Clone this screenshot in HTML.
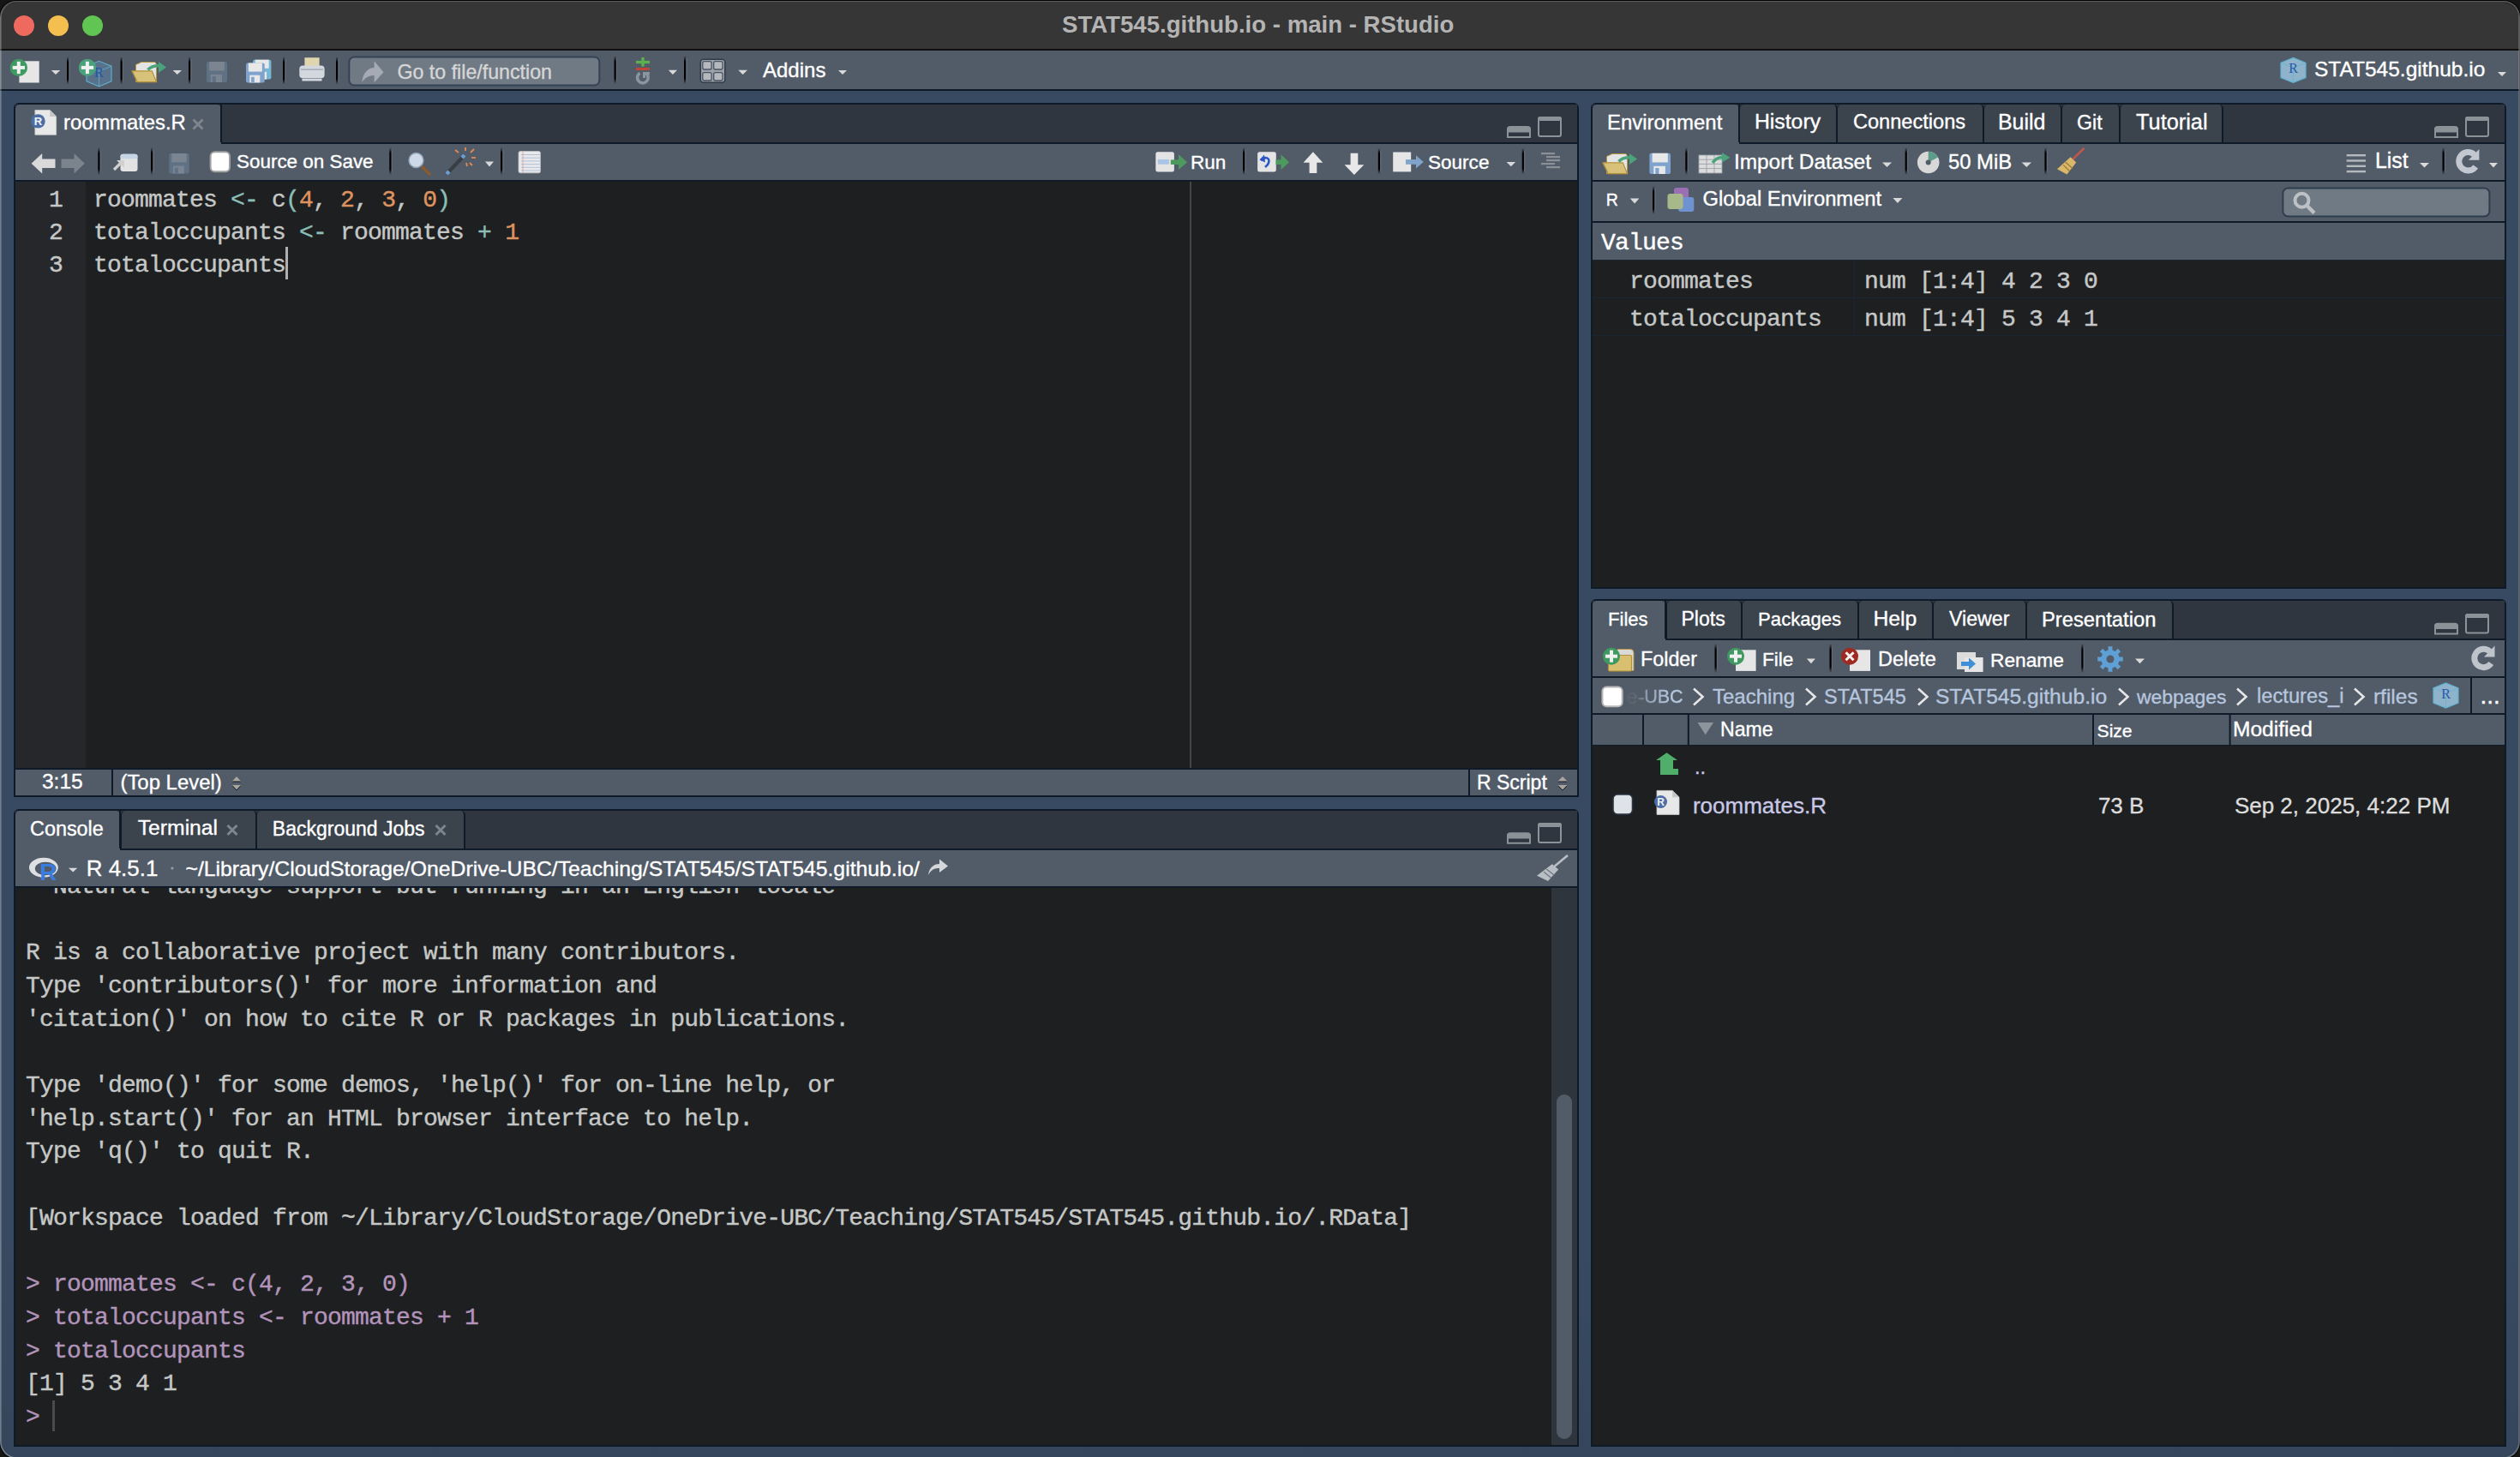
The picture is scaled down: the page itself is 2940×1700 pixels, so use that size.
<!DOCTYPE html><html><head><meta charset="utf-8"><style>
html,body{margin:0;padding:0}
body{width:2940px;height:1700px;position:relative;overflow:hidden;background:#161616}
.a{position:absolute}
.t{white-space:pre}
</style></head><body>
<div class="a" style="left:0;top:3px;width:2939px;height:1699px;background:linear-gradient(to bottom,#384a61 0%,#384a61 85%,#35465c 100%);border-radius:20px 20px 20px 20px;overflow:hidden">
<div class="a" style="left:0;top:0;width:2939px;height:1697px;position:absolute">
</div></div>
<div class="a" style="left:0;top:3px;width:2939px;height:54px;background:#363636;border-radius:20px 20px 0 0"></div>
<div class="a" style="left:0px;top:57px;width:2939px;height:2px;background:#101010;"></div>
<div class="a" style="left:16px;top:18px;width:24px;height:24px;border-radius:50%;background:#ee6a5f"></div>
<div class="a" style="left:56px;top:18px;width:24px;height:24px;border-radius:50%;background:#f5bf4f"></div>
<div class="a" style="left:96px;top:18px;width:24px;height:24px;border-radius:50%;background:#61c554"></div>
<div class="a" style="left:0px;top:59px;width:2939px;height:45px;background:#525c68;"></div>
<div class="a" style="left:0px;top:104px;width:2939px;height:2px;background:#0e1a28;"></div>
<div class="a" style="left:16px;top:120px;width:1822px;height:806px;border:2px solid #0e1a28;border-radius:6px 6px 0 0;background:#1e1f21;overflow:hidden"></div>
<div class="a" style="left:18px;top:122px;width:1822px;height:44px;background:#2f363f;"></div>
<div class="a" style="left:18px;top:166px;width:1822px;height:2px;background:#0e1a28;"></div>
<div class="a" style="left:18px;top:168px;width:1822px;height:42px;background:#525c68;"></div>
<div class="a" style="left:18px;top:210px;width:1822px;height:2px;background:#0e1a28;"></div>
<div class="a" style="left:18px;top:122px;width:240px;height:46px;background:#525c68;border-radius:5px 5px 0 0"></div>
<div class="a" style="left:257px;top:122px;width:2px;height:44px;background:#0e1a28;"></div>
<div class="a" style="left:18px;top:212px;width:82px;height:684px;background:#25272b;"></div>
<div class="a" style="left:1388px;top:212px;width:2px;height:684px;background:#464646;"></div>
<div class="a" style="left:18px;top:896px;width:1822px;height:2px;background:#0e1a28;"></div>
<div class="a" style="left:18px;top:898px;width:1822px;height:30px;background:#525c68;"></div>
<div class="a" style="left:130px;top:898px;width:2px;height:30px;background:#0e1a28;"></div>
<div class="a" style="left:1713px;top:898px;width:2px;height:30px;background:#0e1a28;"></div>
<div class="a" style="left:16px;top:944px;width:1822px;height:740px;border:2px solid #0e1a28;border-radius:6px 6px 0 0;background:#1e1f21;overflow:hidden"></div>
<div class="a" style="left:18px;top:946px;width:1822px;height:44px;background:#2f363f;"></div>
<div class="a" style="left:18px;top:990px;width:1822px;height:2px;background:#0e1a28;"></div>
<div class="a" style="left:18px;top:992px;width:1822px;height:42px;background:#525c68;"></div>
<div class="a" style="left:18px;top:1034px;width:1822px;height:2px;background:#0e1a28;"></div>
<div class="a" style="left:18px;top:946px;width:122px;height:46px;background:#525c68;border-radius:5px 5px 0 0"></div>
<div class="a" style="left:139px;top:946px;width:2px;height:44px;background:#0e1a28;"></div>
<div class="a" style="left:141px;top:946px;width:156px;height:44px;background:#3b434d;border:solid #0e1a28;border-width:0 2px 0 1px;border-radius:5px 5px 0 0"></div>
<div class="a" style="left:299px;top:946px;width:241px;height:44px;background:#3b434d;border:solid #0e1a28;border-width:0 2px 0 1px;border-radius:5px 5px 0 0"></div>
<div class="a" style="left:1810px;top:1036px;width:30px;height:650px;background:#2f353c;"></div>
<div class="a" style="left:1816px;top:1277px;width:18px;height:402px;background:#525c68;border-radius:9px"></div>
<div class="a" style="left:1856px;top:120px;width:1064px;height:563px;border:2px solid #0e1a28;border-radius:6px 6px 0 0;background:#1e1f21;overflow:hidden"></div>
<div class="a" style="left:1858px;top:122px;width:1064px;height:44px;background:#2f363f;"></div>
<div class="a" style="left:1858px;top:166px;width:1064px;height:2px;background:#0e1a28;"></div>
<div class="a" style="left:1858px;top:168px;width:1064px;height:42px;background:#525c68;"></div>
<div class="a" style="left:1858px;top:210px;width:1064px;height:2px;background:#0e1a28;"></div>
<div class="a" style="left:1858px;top:212px;width:1064px;height:46px;background:#525c68;"></div>
<div class="a" style="left:1858px;top:258px;width:1064px;height:2px;background:#0e1a28;"></div>
<div class="a" style="left:1858px;top:260px;width:1064px;height:43px;background:#525c68;"></div>
<div class="a" style="left:1858px;top:122px;width:171px;height:46px;background:#525c68;border-radius:5px 5px 0 0"></div>
<div class="a" style="left:2028px;top:122px;width:2px;height:44px;background:#0e1a28;"></div>
<div class="a" style="left:2029px;top:122px;width:112px;height:44px;background:#3b434d;border:solid #0e1a28;border-width:0 2px 0 1px;border-radius:5px 5px 0 0"></div>
<div class="a" style="left:2143px;top:122px;width:169px;height:44px;background:#3b434d;border:solid #0e1a28;border-width:0 2px 0 1px;border-radius:5px 5px 0 0"></div>
<div class="a" style="left:2314px;top:122px;width:89px;height:44px;background:#3b434d;border:solid #0e1a28;border-width:0 2px 0 1px;border-radius:5px 5px 0 0"></div>
<div class="a" style="left:2405px;top:122px;width:66px;height:44px;background:#3b434d;border:solid #0e1a28;border-width:0 2px 0 1px;border-radius:5px 5px 0 0"></div>
<div class="a" style="left:2473px;top:122px;width:118px;height:44px;background:#3b434d;border:solid #0e1a28;border-width:0 2px 0 1px;border-radius:5px 5px 0 0"></div>
<div class="a" style="left:1858px;top:303px;width:1064px;height:1px;background:#1a2634;"></div>
<div class="a" style="left:1858px;top:347px;width:1064px;height:1px;background:#1a2634;"></div>
<div class="a" style="left:1858px;top:391px;width:1064px;height:1px;background:#1a2634;"></div>
<div class="a" style="left:2163px;top:303px;width:1px;height:88px;background:#1a2634;"></div>
<div class="a" style="left:1856px;top:699px;width:1064px;height:985px;border:2px solid #0e1a28;border-radius:6px 6px 0 0;background:#1e1f21;overflow:hidden"></div>
<div class="a" style="left:1858px;top:701px;width:1064px;height:44px;background:#2f363f;"></div>
<div class="a" style="left:1858px;top:745px;width:1064px;height:2px;background:#0e1a28;"></div>
<div class="a" style="left:1858px;top:747px;width:1064px;height:42px;background:#525c68;"></div>
<div class="a" style="left:1858px;top:789px;width:1064px;height:2px;background:#0e1a28;"></div>
<div class="a" style="left:1858px;top:791px;width:1064px;height:41px;background:#525c68;"></div>
<div class="a" style="left:1858px;top:832px;width:1064px;height:2px;background:#0e1a28;"></div>
<div class="a" style="left:1858px;top:834px;width:1064px;height:36px;background:#525c68;"></div>
<div class="a" style="left:1858px;top:869px;width:1064px;height:1px;background:#0e1a28;"></div>
<div class="a" style="left:1858px;top:701px;width:85px;height:46px;background:#525c68;border-radius:5px 5px 0 0"></div>
<div class="a" style="left:1942px;top:701px;width:2px;height:44px;background:#0e1a28;"></div>
<div class="a" style="left:1944px;top:701px;width:86px;height:44px;background:#3b434d;border:solid #0e1a28;border-width:0 2px 0 1px;border-radius:5px 5px 0 0"></div>
<div class="a" style="left:2032px;top:701px;width:134px;height:44px;background:#3b434d;border:solid #0e1a28;border-width:0 2px 0 1px;border-radius:5px 5px 0 0"></div>
<div class="a" style="left:2168px;top:701px;width:85px;height:44px;background:#3b434d;border:solid #0e1a28;border-width:0 2px 0 1px;border-radius:5px 5px 0 0"></div>
<div class="a" style="left:2255px;top:701px;width:107px;height:44px;background:#3b434d;border:solid #0e1a28;border-width:0 2px 0 1px;border-radius:5px 5px 0 0"></div>
<div class="a" style="left:2364px;top:701px;width:169px;height:44px;background:#3b434d;border:solid #0e1a28;border-width:0 2px 0 1px;border-radius:5px 5px 0 0"></div>
<svg class="a" style="left:0;top:0" width="2940" height="1700" viewBox="0 0 2940 1700"><defs><linearGradient id="sepg" x1="0" y1="0" x2="0" y2="1"><stop offset="0" stop-color="#000" stop-opacity="0"/><stop offset="0.2" stop-color="#000" stop-opacity="1"/><stop offset="0.8" stop-color="#000" stop-opacity="1"/><stop offset="1" stop-color="#000" stop-opacity="0"/></linearGradient></defs>
<rect x="22.4" y="71.3" width="23.3" height="25.2" fill="#e6e6e6"/>
<circle cx="21.8" cy="78.9" r="10.2" fill="#3f9a62"/>
<rect x="14.7" y="76.9" width="14.3" height="4" fill="#f0f0f0"/>
<rect x="19.8" y="71.8" width="4" height="14.3" fill="#f0f0f0"/>
<polygon points="59.8,82.0 70.2,82.0 65.0,87.0" fill="#d9d9d9"/>
<rect x="78" y="66" width="2.2" height="32.5" fill="url(#sepg)"/>
<rect x="80.6" y="69" width="1" height="26.5" fill="#6f7882" opacity="0.6"/>
<polygon points="101.0,77.2 115.5,71.3 130.0,77.2 130.0,94.9 115.5,100.8 101.0,94.9" fill="#5a7590" opacity="0.9" stroke="#62b3d6" stroke-width="1.2"/>
<polyline points="101.0,77.2 115.5,83.1 130.0,77.2" fill="none" stroke="#62b3d6" stroke-width="1" opacity="0.7"/>
<line x1="115.5" y1="83.1" x2="115.5" y2="100.8" stroke="#62b3d6" stroke-width="1" opacity="0.7"/>
<text x="115.5" y="89.59" font-family="Liberation Serif" font-size="16.2" fill="#2456a8" text-anchor="middle">R</text>
<circle cx="101.9" cy="78.9" r="10.2" fill="#4aa27b"/>
<rect x="94.8" y="76.9" width="14.3" height="4" fill="#f0f0f0"/>
<rect x="99.9" y="71.8" width="4" height="14.3" fill="#f0f0f0"/>
<rect x="140.5" y="66" width="2.2" height="32.5" fill="url(#sepg)"/>
<rect x="143.1" y="69" width="1" height="26.5" fill="#6f7882" opacity="0.6"/>
<polygon points="158.5,75.5 165.0,72.5 181.0,72.5 182.5,75.0 182.5,95.6 158.5,95.6" fill="#e4e4e4" stroke="#b39644" stroke-width="1"/>
<polygon points="154.0,82.8 177.3,82.8 182.5,95.6 160.3,95.6" fill="#d8c27a" stroke="#b3923a" stroke-width="1.2"/>
<path d="M172.5,81.5 Q177.0,76.5 186.0,76.8" fill="none" stroke="#4aa37a" stroke-width="3.6"/>
<polygon points="185.0,72.0 194.0,78.6 185.0,85.0" fill="#4aa37a"/>
<polygon points="201.7,82.0 212.0,82.0 206.8,87.0" fill="#d9d9d9"/>
<rect x="220" y="66" width="2.2" height="32.5" fill="url(#sepg)"/>
<rect x="222.6" y="69" width="1" height="26.5" fill="#6f7882" opacity="0.6"/>
<rect x="241" y="72" width="24" height="24" rx="2" fill="#5f7185"/>
<rect x="244.12" y="72" width="17.759999999999998" height="10.56" fill="#7b8591"/>
<rect x="245.8" y="86.88" width="13.200000000000001" height="9.120000000000001" fill="#7b8591"/>
<rect x="247.72" y="89.03999999999999" width="4.08" height="6.959999999999999" fill="#5f7185"/>
<rect x="295" y="69.7" width="21.399999999999977" height="22.89999999999999" rx="2" fill="#78b6d6"/>
<rect x="297.782" y="69.7" width="15.835999999999983" height="10.075999999999997" fill="#e8e8e8"/>
<rect x="299.28" y="83.898" width="11.769999999999989" height="8.701999999999996" fill="#e8e8e8"/>
<rect x="300.992" y="85.959" width="3.6379999999999963" height="6.640999999999997" fill="#78b6d6"/>
<rect x="287" y="73.5" width="21.69999999999999" height="22.900000000000006" rx="2" fill="#7fa3cc"/>
<rect x="289.821" y="73.5" width="16.057999999999993" height="10.076000000000002" fill="#e8e8e8"/>
<rect x="291.34" y="87.69800000000001" width="11.934999999999995" height="8.702000000000002" fill="#e8e8e8"/>
<rect x="293.076" y="89.759" width="3.6889999999999983" height="6.641000000000001" fill="#7fa3cc"/>
<rect x="330" y="66" width="2.2" height="32.5" fill="url(#sepg)"/>
<rect x="332.6" y="69" width="1" height="26.5" fill="#6f7882" opacity="0.6"/>
<rect x="355.4" y="67.2" width="17.2" height="14" fill="#dfd5ae"/>
<rect x="349.3" y="76.4" width="29.3" height="14.8" rx="4" fill="#d3d7de"/>
<rect x="352.4" y="91.7" width="23.1" height="2.8" fill="#d3d7de"/>
<rect x="351" y="80.6" width="26" height="1" fill="#8c95a1"/>
<rect x="392" y="66" width="2.2" height="32.5" fill="url(#sepg)"/>
<rect x="394.6" y="69" width="1" height="26.5" fill="#6f7882" opacity="0.6"/>
<rect x="407.3" y="66.4" width="292" height="33.2" rx="6" fill="#6f7a85" stroke="#344255" stroke-width="2"/>
<path d="M422.3,96 C423,86 429,79 436.6,79 V71.2 L447.5,84.2 L436.6,96.3 V88 C430,88 425.5,91 422.3,96 Z" fill="#a5aab5"/>
<rect x="716.5" y="65" width="2.2" height="33" fill="url(#sepg)"/>
<rect x="719.1" y="68" width="1" height="27" fill="#6f7882" opacity="0.6"/>
<rect x="742" y="70.8" width="16" height="3.4" fill="#5cb04f"/><rect x="748.3" y="67" width="3.4" height="10.6" fill="#5cb04f"/>
<rect x="742" y="79" width="16" height="3" fill="#c0463a"/>
<path d="M746.5,85.2 A6.3,6.3 0 1 0 753.2,85.2" fill="none" stroke="#8a95a2" stroke-width="3.6"/>
<rect x="750" y="84" width="8" height="3.2" fill="#8a95a2"/><rect x="750" y="84" width="3" height="7" fill="#8a95a2"/>
<polygon points="779.8,81.8 790.0,81.8 784.9,87.0" fill="#d9d9d9"/>
<rect x="798" y="65" width="2.2" height="33" fill="url(#sepg)"/>
<rect x="800.6" y="68" width="1" height="27" fill="#6f7882" opacity="0.6"/>
<rect x="817.3" y="69.2" width="28.5" height="27" rx="3.5" fill="#9da2a8" stroke="#2e3a48" stroke-width="1.5"/>
<rect x="819.8" y="71.7" width="10.3" height="9.3" rx="2" fill="#b5b9be" stroke="#485464" stroke-width="1.3"/>
<rect x="832.7" y="71.7" width="10.3" height="9.3" rx="2" fill="#b5b9be" stroke="#485464" stroke-width="1.3"/>
<rect x="819.8" y="84.7" width="10.3" height="9.3" rx="2" fill="#b5b9be" stroke="#485464" stroke-width="1.3"/>
<rect x="832.7" y="84.7" width="10.3" height="9.3" rx="2" fill="#b5b9be" stroke="#485464" stroke-width="1.3"/>
<polygon points="861.3,81.8 872.0,81.8 866.6,87.0" fill="#d9d9d9"/>
<polygon points="978.0,82.0 988.0,82.0 983.0,87.0" fill="#d9d9d9"/>
<polygon points="2661.0,73.3 2675.5,67.5 2690.0,73.3 2690.0,90.6 2675.5,96.4 2661.0,90.6" fill="#8fb3cb" opacity="1.0" stroke="#5fb3d2" stroke-width="1.2"/>
<polyline points="2661.0,73.3 2675.5,79.1 2690.0,73.3" fill="none" stroke="#5fb3d2" stroke-width="1" opacity="0.7"/>
<line x1="2675.5" y1="79.06" x2="2675.5" y2="96.4" stroke="#5fb3d2" stroke-width="1" opacity="0.7"/>
<text x="2675.5" y="85.418" font-family="Liberation Serif" font-size="15.9" fill="#2a58a8" text-anchor="middle">R</text>
<polygon points="2914.0,84.0 2924.0,84.0 2919.0,89.0" fill="#d9d9d9"/>
<polygon points="40.9,128.5 58.2,128.5 65.6,135.9 65.6,157.3 40.9,157.3" fill="#e8e8e8" stroke="#c9c9c9" stroke-width="0.8"/>
<polygon points="58.2,128.5 58.2,135.9 65.6,135.9" fill="#c6c6c6"/>
<circle cx="44.5" cy="141.4" r="8.2" fill="#4c6ea6"/>
<text x="44.5" y="145.9" font-family="Liberation Sans" font-size="13.1" font-weight="700" fill="#f2f2f2" text-anchor="middle">R</text>
<path d="M225.5,139.5 L236.5,150.5 M236.5,139.5 L225.5,150.5" stroke="#7d858d" stroke-width="3"/>
<path d="M1759,160 V151 Q1759,148 1762,148 H1782 Q1785,148 1785,151 V160 Z" fill="none" stroke="#8b9399" stroke-width="2"/>
<rect x="1758" y="148" width="28" height="6.6" rx="3" fill="#8b9399"/>
<rect x="1795" y="137" width="26" height="22" rx="2" fill="none" stroke="#8b9399" stroke-width="2"/>
<rect x="1794" y="136" width="28" height="5" rx="3" fill="#8b9399"/>
<polygon points="36.6,190.8 49.2,179.0 49.2,185.6 64.5,185.6 64.5,195.9 49.2,195.9 49.2,202.5" fill="#d9d9d9"/>
<polygon points="98.8,190.8 86.5,179.0 86.5,185.6 71.5,185.6 71.5,195.9 86.5,195.9 86.5,202.5" fill="#7b838c"/>
<rect x="114.3" y="172" width="2.2" height="32" fill="url(#sepg)"/>
<rect x="116.89999999999999" y="175" width="1" height="26" fill="#6f7882" opacity="0.6"/>
<rect x="140.5" y="179.7" width="20" height="20.3" rx="3" fill="#e3e3e3"/><rect x="140.5" y="179.7" width="20" height="5.5" rx="3" fill="#c5d5e6"/>
<path d="M133,198 L141,190" stroke="#d0d0d0" stroke-width="3.2"/><polygon points="136,187 145,187 145,196" fill="#d0d0d0"/>
<rect x="176" y="172" width="2.2" height="32" fill="url(#sepg)"/>
<rect x="178.6" y="175" width="1" height="26" fill="#6f7882" opacity="0.6"/>
<rect x="197.2" y="179" width="23.5" height="23.5" rx="2" fill="#5f7185"/>
<rect x="200.255" y="179" width="17.39" height="10.34" fill="#7b8591"/>
<rect x="201.89999999999998" y="193.57" width="12.925" height="8.93" fill="#7b8591"/>
<rect x="203.78" y="195.685" width="3.995" height="6.8149999999999995" fill="#5f7185"/>
<rect x="245.6" y="177.3" width="22.400000000000006" height="23.0" rx="5" fill="#ffffff" stroke="#a0a0a0" stroke-width="2"/>
<rect x="454.3" y="172" width="2.2" height="32" fill="url(#sepg)"/>
<rect x="456.90000000000003" y="175" width="1" height="26" fill="#6f7882" opacity="0.6"/>
<line x1="493" y1="195" x2="501" y2="203" stroke="#8a5a2e" stroke-width="3.6" stroke-linecap="round"/>
<circle cx="485.5" cy="187" r="8.5" fill="#cdd9e6" stroke="#8ea2b5" stroke-width="1.5"/>
<line x1="521" y1="203" x2="542" y2="181" stroke="#3a3f45" stroke-width="4.5"/>
<line x1="521" y1="203" x2="524" y2="200" stroke="#6b9fd0" stroke-width="4.5"/><line x1="539" y1="184" x2="542" y2="181" stroke="#6b9fd0" stroke-width="4.5"/>
<line x1="535" y1="178" x2="531" y2="175" stroke="#e08a55" stroke-width="1.8"/>
<line x1="543" y1="176" x2="543" y2="172" stroke="#e08a55" stroke-width="1.8"/>
<line x1="549" y1="178" x2="553" y2="174" stroke="#e08a55" stroke-width="1.8"/>
<line x1="550" y1="184" x2="555" y2="184" stroke="#e08a55" stroke-width="1.8"/>
<line x1="548" y1="190" x2="551" y2="193" stroke="#e08a55" stroke-width="1.8"/>
<line x1="544" y1="190" x2="545" y2="194" stroke="#e08a55" stroke-width="1.8"/>
<polygon points="566.0,188.6 576.0,188.6 571.0,194.5" fill="#d9d9d9"/>
<rect x="584" y="172" width="2.2" height="32" fill="url(#sepg)"/>
<rect x="586.6" y="175" width="1" height="26" fill="#6f7882" opacity="0.6"/>
<rect x="605" y="176.5" width="25.5" height="25.3" rx="2" fill="#e9e9ec" stroke="#b9bcc4" stroke-width="0.8"/>
<line x1="608" y1="180.5" x2="630" y2="180.5" stroke="#a9bdd6" stroke-width="0.9"/>
<line x1="608" y1="184.2" x2="630" y2="184.2" stroke="#a9bdd6" stroke-width="0.9"/>
<line x1="608" y1="187.9" x2="630" y2="187.9" stroke="#a9bdd6" stroke-width="0.9"/>
<line x1="608" y1="191.6" x2="630" y2="191.6" stroke="#a9bdd6" stroke-width="0.9"/>
<line x1="608" y1="195.3" x2="630" y2="195.3" stroke="#a9bdd6" stroke-width="0.9"/>
<line x1="608" y1="199.0" x2="630" y2="199.0" stroke="#a9bdd6" stroke-width="0.9"/>
<line x1="610" y1="176.5" x2="610" y2="201.8" stroke="#d9a0a0" stroke-width="0.9"/>
<rect x="1348.3" y="177.3" width="21.6" height="23.2" rx="2.5" fill="#e4e4e4"/><rect x="1350.8" y="186" width="13.2" height="5.7" fill="#a9c4e4"/>
<rect x="1365.8" y="186.4" width="9.4" height="5.6" fill="#4e9a5e"/><polygon points="1375,180.2 1385,189.2 1375,198" fill="#4e9a5e"/>
<rect x="1450" y="172" width="2.2" height="32" fill="url(#sepg)"/>
<rect x="1452.6" y="175" width="1" height="26" fill="#6f7882" opacity="0.6"/>
<rect x="1467.1" y="177.3" width="21.7" height="23.2" rx="2.5" fill="#e4e4e4"/>
<path d="M1471,187 C1476,182 1482,184 1480,190 C1479,193 1477,194 1476,195" fill="none" stroke="#2a56c6" stroke-width="2.6"/><polygon points="1469.5,186.5 1475,180.5 1476,189.5" fill="#2a56c6"/>
<rect x="1488.5" y="186.4" width="7" height="5.6" fill="#4e9a5e"/><polygon points="1494.5,180.2 1504.1,189.2 1494.5,198" fill="#4e9a5e"/>
<polygon points="1531.9,177.3 1543.3,189.7 1536.3,189.7 1536.3,202.0 1527.6,202.0 1527.6,189.7 1520.6,189.7" fill="#e8e8e8"/>
<polygon points="1579.9,204.0 1591.3,192.2 1584.3,192.2 1584.3,178.8 1575.6,178.8 1575.6,192.2 1568.6,192.2" fill="#e8e8e8"/>
<rect x="1607.8" y="172.8" width="2.2" height="30.399999999999977" fill="url(#sepg)"/>
<rect x="1610.3999999999999" y="175.8" width="1" height="24.399999999999977" fill="#6f7882" opacity="0.6"/>
<rect x="1625.2" y="177.5" width="21" height="22.9" fill="#e6e6e6"/>
<rect x="1640" y="186.1" width="12.5" height="5.7" fill="#7fa3c9"/><polygon points="1652,181.3 1660.8,189 1652,196.6" fill="#7fa3c9"/>
<polygon points="1757.6,189.0 1768.1,189.0 1762.8,194.2" fill="#d9d9d9"/>
<rect x="1775.7" y="172.8" width="2.2" height="30.399999999999977" fill="url(#sepg)"/>
<rect x="1778.3" y="175.8" width="1" height="24.399999999999977" fill="#6f7882" opacity="0.6"/>
<rect x="1798" y="178" width="16" height="2.2" fill="#8a9096"/>
<rect x="1804" y="182" width="16" height="2.2" fill="#8a9096"/>
<rect x="1804" y="186" width="16" height="2.2" fill="#8a9096"/>
<rect x="1798" y="190" width="16" height="2.2" fill="#8a9096"/>
<rect x="1804" y="194" width="16" height="2.2" fill="#8a9096"/>
<polygon points="271.0,912.5 281.0,912.5 276.0,906.9" fill="#0d1520"/>
<polygon points="271.0,911.5 281.0,911.5 276.0,905.9" fill="#aaa59d"/>
<polygon points="271.0,916.9 281.0,916.9 276.0,922.5" fill="#0d1520"/>
<polygon points="271.0,915.9 281.0,915.9 276.0,921.5" fill="#aaa59d"/>
<polygon points="1817.5,912.5 1828.5,912.5 1823.0,906.9" fill="#0d1520"/>
<polygon points="1817.5,911.5 1828.5,911.5 1823.0,905.9" fill="#aaa59d"/>
<polygon points="1817.5,916.9 1828.5,916.9 1823.0,922.5" fill="#0d1520"/>
<polygon points="1817.5,915.9 1828.5,915.9 1823.0,921.5" fill="#aaa59d"/>
<path d="M265.5,963.0 L276.5,974.0 M276.5,963.0 L265.5,974.0" stroke="#7d858d" stroke-width="3"/>
<path d="M508.5,963.0 L519.5,974.0 M519.5,963.0 L508.5,974.0" stroke="#7d858d" stroke-width="3"/>
<path d="M1759,983.8 V975.3 Q1759,972.3 1762,972.3 H1782 Q1785,972.3 1785,975.3 V983.8 Z" fill="none" stroke="#8b9399" stroke-width="2"/>
<rect x="1758" y="972.3" width="28" height="6.3" rx="3" fill="#8b9399"/>
<rect x="1795" y="961" width="26" height="22" rx="2" fill="none" stroke="#8b9399" stroke-width="2"/>
<rect x="1794" y="960" width="28" height="5" rx="3" fill="#8b9399"/>
<path fill-rule="evenodd" fill="#dedfe3" d="M33.9,1012.2 A17,11.4 0 1 0 67.9,1012.2 A17,11.4 0 1 0 33.9,1012.2 Z M40.8,1013.5 A12.35,7.75 0 1 0 65.5,1013.5 A12.35,7.75 0 1 0 40.8,1013.5 Z"/>
<text x="46.3" y="1027" font-family="Liberation Sans" font-weight="700" font-size="27" fill="#3a7ce0" textLength="20" lengthAdjust="spacingAndGlyphs">R</text>
<polygon points="80.0,1012.8 90.3,1012.8 85.2,1017.5" fill="#d9d9d9"/>
<circle cx="201" cy="1013" r="1.6" fill="#9aa1a8"/>
<path d="M1083,1021 C1084,1012 1090,1008 1096,1008 V1002.5 L1106,1010.5 L1096,1018 V1013 C1090,1013 1086,1015 1083,1021 Z" fill="#d4d6da"/>
<line x1="1829" y1="998" x2="1813.35" y2="1010.95" stroke="#b9bec4" stroke-width="2.6"/>
<polygon points="1810.8,1008.2 1818.2,1014.4 1806.0,1028.0 1793.0,1021.8" fill="#b9bec4"/>
<line x1="1804.1" y1="1014.05" x2="1813.35" y2="1021.18" stroke="#6f7780" stroke-width="1.3"/>
<line x1="1801.14" y1="1017.15" x2="1809.65" y2="1024.28" stroke="#6f7780" stroke-width="1.3"/>
<polygon points="1874.5,182.5 1881.0,179.5 1897.0,179.5 1898.5,182.0 1898.5,202.6 1874.5,202.6" fill="#e4e4e4" stroke="#b39644" stroke-width="1"/>
<polygon points="1870.0,189.8 1893.3,189.8 1898.5,202.6 1876.3,202.6" fill="#d8c27a" stroke="#b3923a" stroke-width="1.2"/>
<path d="M1888.5,188.5 Q1893.0,183.5 1902.0,183.8" fill="none" stroke="#4aa37a" stroke-width="3.6"/>
<polygon points="1901.0,179.0 1910.0,185.6 1901.0,192.0" fill="#4aa37a"/>
<rect x="1924.4" y="178.8" width="24.59999999999991" height="24.19999999999999" rx="2" fill="#7fa3cc"/>
<rect x="1927.5980000000002" y="178.8" width="18.203999999999933" height="10.647999999999994" fill="#e8e8e8"/>
<rect x="1929.3200000000002" y="193.804" width="13.529999999999951" height="9.195999999999996" fill="#e8e8e8"/>
<rect x="1931.288" y="195.982" width="4.181999999999984" height="7.017999999999996" fill="#7fa3cc"/>
<rect x="1966.3" y="172" width="2.2" height="32" fill="url(#sepg)"/>
<rect x="1968.8999999999999" y="175" width="1" height="26" fill="#6f7882" opacity="0.6"/>
<rect x="1982" y="181" width="27" height="21" fill="#dcdcdc" stroke="#9aa0a6" stroke-width="0.8"/>
<line x1="1982" y1="186.2" x2="2009" y2="186.2" stroke="#9aa0a6" stroke-width="0.9"/>
<line x1="1982" y1="191.4" x2="2009" y2="191.4" stroke="#9aa0a6" stroke-width="0.9"/>
<line x1="1982" y1="196.6" x2="2009" y2="196.6" stroke="#9aa0a6" stroke-width="0.9"/>
<line x1="1991" y1="181" x2="1991" y2="202" stroke="#9aa0a6" stroke-width="0.9"/>
<line x1="2000" y1="181" x2="2000" y2="202" stroke="#9aa0a6" stroke-width="0.9"/>
<path d="M1998,190 Q2003,183 2010,183.5" fill="none" stroke="#4aa37a" stroke-width="3.4"/><polygon points="2009,178 2018.5,183.8 2009,189.5" fill="#4aa37a"/>
<polygon points="2196.0,189.5 2207.0,189.5 2201.5,195.0" fill="#d9d9d9"/>
<rect x="2222.6" y="172" width="2.2" height="32" fill="url(#sepg)"/>
<rect x="2225.2" y="175" width="1" height="26" fill="#6f7882" opacity="0.6"/>
<circle cx="2249.7" cy="189.5" r="12.8" fill="#d8d8d8"/><path d="M2249.7,189.5 V176.7 A12.8,12.8 0 0 1 2261,183.5 Z" fill="#5c9c88"/><circle cx="2249.7" cy="189.5" r="3" fill="#525c68"/>
<polygon points="2358.7,189.5 2370.0,189.5 2364.3,195.0" fill="#d9d9d9"/>
<rect x="2385.4" y="172" width="2.2" height="32" fill="url(#sepg)"/>
<rect x="2388.0" y="175" width="1" height="26" fill="#6f7882" opacity="0.6"/>
<line x1="2431.6" y1="172.8" x2="2417.93" y2="186.065" stroke="#c0554a" stroke-width="2.6"/>
<polygon points="2415.6,183.2 2422.2,189.6 2411.4,203.5 2400.0,197.2" fill="#d9b86a"/>
<line x1="2409.7799999999997" y1="189.235" x2="2417.93" y2="196.526" stroke="#9a7a3a" stroke-width="1.3"/>
<line x1="2407.172" y1="192.405" x2="2414.67" y2="199.696" stroke="#9a7a3a" stroke-width="1.3"/>
<rect x="2737.7" y="180.0" width="22.3" height="2.4" fill="#b5b9be"/>
<rect x="2737.7" y="186.3" width="22.3" height="2.4" fill="#b5b9be"/>
<rect x="2737.7" y="192.6" width="22.3" height="2.4" fill="#b5b9be"/>
<rect x="2737.7" y="198.9" width="22.3" height="2.4" fill="#b5b9be"/>
<polygon points="2823.0,190.0 2834.0,190.0 2828.5,195.5" fill="#d9d9d9"/>
<rect x="2849.5" y="172" width="2.2" height="32" fill="url(#sepg)"/>
<rect x="2852.1" y="175" width="1" height="26" fill="#6f7882" opacity="0.6"/>
<path d="M2888.2,194.4 A10.7,10.7 0 1 1 2886.6,180.3" fill="none" stroke="#c3c8d0" stroke-width="7"/>
<polygon points="2892.4,173.9 2892.4,186.8 2879.9,186.8" fill="#c3c8d0"/>
<polygon points="2904.0,190.0 2914.0,190.0 2909.0,195.5" fill="#d9d9d9"/>
<path d="M2841,160 V151 Q2841,148 2844,148 H2864 Q2867,148 2867,151 V160 Z" fill="none" stroke="#8b9399" stroke-width="2"/>
<rect x="2840" y="148" width="28" height="6.6" rx="3" fill="#8b9399"/>
<rect x="2877" y="137" width="26" height="22" rx="2" fill="none" stroke="#8b9399" stroke-width="2"/>
<rect x="2876" y="136" width="28" height="5" rx="3" fill="#8b9399"/>
<polygon points="1901.8,231.6 1912.4,231.6 1907.1,237.6" fill="#d9d9d9"/>
<rect x="1928" y="217" width="2.2" height="33" fill="url(#sepg)"/>
<rect x="1930.6" y="220" width="1" height="27" fill="#6f7882" opacity="0.6"/>
<rect x="1953" y="219" width="17" height="17" rx="3" fill="#9b6fb3"/><rect x="1958" y="230" width="18.3" height="17" rx="3" fill="#6f93d0"/><rect x="1945.5" y="226" width="18" height="18" rx="3" fill="#a7b98a"/>
<polygon points="2208.5,231.0 2219.4,231.0 2213.9,237.0" fill="#d9d9d9"/>
<rect x="2663.4" y="219.5" width="241" height="33" rx="6" fill="#6f7a85" stroke="#2e3c4d" stroke-width="2"/>
<circle cx="2685.5" cy="233.8" r="8" fill="none" stroke="#bdc1c5" stroke-width="4"/><line x1="2691" y1="239.5" x2="2700" y2="248.5" stroke="#bdc1c5" stroke-width="4.5"/>
<path d="M2841,739.4 V730.7 Q2841,727.7 2844,727.7 H2864 Q2867,727.7 2867,730.7 V739.4 Z" fill="none" stroke="#8b9399" stroke-width="2"/>
<rect x="2840" y="727.7" width="28" height="6.4" rx="3" fill="#8b9399"/>
<rect x="2877" y="716.9" width="26" height="21.5" rx="2" fill="none" stroke="#8b9399" stroke-width="2"/>
<rect x="2876" y="715.9" width="28" height="5" rx="3" fill="#8b9399"/>
<path d="M1885,782.5 V762 Q1885,757.5 1889,757.5 H1902 Q1906,757.5 1906,761.5 V782.5 Z" fill="#d9d9d9" stroke="#b3923a" stroke-width="1"/>
<rect x="1876.5" y="764.5" width="27" height="18.5" rx="1.5" fill="#d8c070" stroke="#b3923a" stroke-width="1.2"/>
<circle cx="1880" cy="765.7" r="10" fill="#3f9a62"/>
<rect x="1873.0" y="763.7" width="14.0" height="4" fill="#f0f0f0"/>
<rect x="1878.0" y="758.7" width="4" height="14.0" fill="#f0f0f0"/>
<rect x="2000.5" y="751" width="2.2" height="34" fill="url(#sepg)"/>
<rect x="2003.1" y="754" width="1" height="28" fill="#6f7882" opacity="0.6"/>
<rect x="2025" y="758.3" width="23.6" height="24.6" fill="#e6e6e6"/>
<circle cx="2025" cy="765.7" r="10" fill="#3f9a62"/>
<rect x="2018.0" y="763.7" width="14.0" height="4" fill="#f0f0f0"/>
<rect x="2023.0" y="758.7" width="4" height="14.0" fill="#f0f0f0"/>
<polygon points="2107.9,768.6 2117.9,768.6 2112.9,774.3" fill="#d9d9d9"/>
<rect x="2134.5" y="751" width="2.2" height="34" fill="url(#sepg)"/>
<rect x="2137.1" y="754" width="1" height="28" fill="#6f7882" opacity="0.6"/>
<rect x="2158" y="758.3" width="24" height="24.6" fill="#e6e6e6"/>
<circle cx="2158" cy="765.7" r="10" fill="#9e2a22"/><path d="M2153.5,761.2 L2162.5,770.2 M2162.5,761.2 L2153.5,770.2" stroke="#f2f2f2" stroke-width="3"/>
<rect x="2283" y="761" width="22" height="20" fill="#dcdcdc"/><rect x="2292" y="767" width="21.6" height="17" fill="#e6e6e6"/>
<rect x="2288" y="772" width="10" height="5" fill="#3e8fd6"/><polygon points="2297,767.5 2305,774.5 2297,781.5" fill="#3e8fd6"/>
<rect x="2428.3" y="751" width="2.2" height="34" fill="url(#sepg)"/>
<rect x="2430.9" y="754" width="1" height="28" fill="#6f7882" opacity="0.6"/>
<polygon points="2476.8,766.5 2476.8,771.5 2472.5,771.4 2471.1,774.8 2474.2,777.7 2470.7,781.2 2467.8,778.1 2464.4,779.5 2464.5,783.8 2459.5,783.8 2459.6,779.5 2456.2,778.1 2453.3,781.2 2449.8,777.7 2452.9,774.8 2451.5,771.4 2447.2,771.5 2447.2,766.5 2451.5,766.6 2452.9,763.2 2449.8,760.3 2453.3,756.8 2456.2,759.9 2459.6,758.5 2459.5,754.2 2464.5,754.2 2464.4,758.5 2467.8,759.9 2470.7,756.8 2474.2,760.3 2471.1,763.2 2472.5,766.6" fill="#5ea0d6"/>
<circle cx="2462" cy="769" r="4.5" fill="#525c68"/>
<polygon points="2491.0,768.6 2502.0,768.6 2496.5,774.3" fill="#d9d9d9"/>
<path d="M2906.3,774.1 A10.7,10.7 0 1 1 2904.7,760.0" fill="none" stroke="#bfc3ca" stroke-width="7"/>
<polygon points="2910.5,753.6 2910.5,766.5 2898.0,766.5" fill="#bfc3ca"/>
<rect x="1869.4" y="801.5" width="23.299999999999955" height="22.700000000000045" rx="5" fill="#ffffff" stroke="#b5b5b5" stroke-width="2"/>
<rect x="1901" y="808" width="18" height="18" fill="#525c68" opacity="0.6"/>
<polyline points="1976.0,803.5 1986.5,813.0 1976.0,822.5" fill="none" stroke="#e6e6e6" stroke-width="2.6"/>
<polyline points="2107.0,803.5 2117.5,813.0 2107.0,822.5" fill="none" stroke="#e6e6e6" stroke-width="2.6"/>
<polyline points="2238.0,803.5 2248.5,813.0 2238.0,822.5" fill="none" stroke="#e6e6e6" stroke-width="2.6"/>
<polyline points="2472.0,803.5 2482.5,813.0 2472.0,822.5" fill="none" stroke="#e6e6e6" stroke-width="2.6"/>
<polyline points="2610.0,803.5 2620.5,813.0 2610.0,822.5" fill="none" stroke="#e6e6e6" stroke-width="2.6"/>
<polyline points="2747.0,803.5 2757.5,813.0 2747.0,822.5" fill="none" stroke="#e6e6e6" stroke-width="2.6"/>
<polygon points="2839.0,802.8 2853.5,797.0 2868.0,802.8 2868.0,820.2 2853.5,826.0 2839.0,820.2" fill="#8fb3cb" opacity="1.0" stroke="#5fb3d2" stroke-width="1.2"/>
<polyline points="2839.0,802.8 2853.5,808.6 2868.0,802.8" fill="none" stroke="#5fb3d2" stroke-width="1" opacity="0.7"/>
<line x1="2853.5" y1="808.6" x2="2853.5" y2="826" stroke="#5fb3d2" stroke-width="1" opacity="0.7"/>
<text x="2853.5" y="814.98" font-family="Liberation Serif" font-size="16.0" fill="#2a58a8" text-anchor="middle">R</text>
<rect x="2882" y="791" width="2" height="41" fill="#0e1a28"/>
<rect x="1916" y="834" width="2" height="36" fill="#0e1a28"/>
<rect x="1968.8" y="834" width="2" height="36" fill="#0e1a28"/>
<rect x="2441" y="834" width="2" height="36" fill="#0e1a28"/>
<rect x="2600.6" y="834" width="2" height="36" fill="#0e1a28"/>
<polygon points="1980.5,843.0 1999.0,843.0 1989.7,857.3" fill="#8c949c"/>
<path d="M1937,904 V887 H1932 L1944.5,878.3 L1957,887 H1952 V897 H1958 V904 Z" fill="#4fae6a"/>
<rect x="1882" y="927" width="22.5" height="23" rx="5" fill="#dfe2e6" stroke="#2a3644" stroke-width="1.6"/>
<polygon points="1933.0,922.4 1951.2,922.4 1959.0,930.2 1959.0,950.4 1933.0,950.4" fill="#e8e8e8" stroke="#c9c9c9" stroke-width="0.8"/>
<polygon points="1951.2,922.4 1951.2,930.2 1959.0,930.2" fill="#c6c6c6"/>
<circle cx="1937.5" cy="935.5" r="7.5" fill="#4c6ea6"/>
<text x="1937.5" y="939.6" font-family="Liberation Sans" font-size="12.0" font-weight="700" fill="#f2f2f2" text-anchor="middle">R</text></svg>
<div id="tx0" class="a t" style="left:1239.00px;top:15.34px;font-family:'Liberation Sans', sans-serif;font-size:27.600px;line-height:27.600px;color:#b4b4b4;font-weight:700;">STAT545.github.io - main - RStudio</div>
<div id="tx1" class="a t" style="left:890.00px;top:69.78px;font-family:'Liberation Sans', sans-serif;font-size:24.000px;line-height:24.000px;color:#ffffff;font-weight:400;-webkit-text-stroke:0.35px currentColor;">Addins</div>
<div id="tx2" class="a t" style="left:463.49px;top:72.87px;font-family:'Liberation Sans', sans-serif;font-size:23.195px;line-height:23.195px;color:#d6d6d6;font-weight:400;-webkit-text-stroke:0.35px currentColor;">Go to file/function</div>
<div id="tx3" class="a t" style="left:2700.00px;top:69.26px;font-family:'Liberation Sans', sans-serif;font-size:24.501px;line-height:24.501px;color:#ffffff;font-weight:400;-webkit-text-stroke:0.35px currentColor;">STAT545.github.io</div>
<div id="tx4" class="a t" style="left:73.99px;top:130.55px;font-family:'Liberation Sans', sans-serif;font-size:23.799px;line-height:23.799px;color:#ffffff;font-weight:400;-webkit-text-stroke:0.35px currentColor;">roommates.R</div>
<div id="tx5" class="a t" style="left:276.02px;top:178.41px;font-family:'Liberation Sans', sans-serif;font-size:22.433px;line-height:22.433px;color:#ffffff;font-weight:400;-webkit-text-stroke:0.35px currentColor;">Source on Save</div>
<div id="tx6" class="a t" style="left:1388.98px;top:178.74px;font-family:'Liberation Sans', sans-serif;font-size:22.515px;line-height:22.515px;color:#ffffff;font-weight:400;-webkit-text-stroke:0.35px currentColor;">Run</div>
<div id="tx7" class="a t" style="left:1665.99px;top:178.71px;font-family:'Liberation Sans', sans-serif;font-size:22.550px;line-height:22.550px;color:#ffffff;font-weight:400;-webkit-text-stroke:0.35px currentColor;">Source</div>
<div id="tx8" class="a t" style="left:57.00px;top:219.75px;font-family:'Liberation Mono', monospace;font-size:28.000px;line-height:28.000px;color:#c5c8c6;font-weight:400;letter-spacing:-0.8px;-webkit-text-stroke:0.4px currentColor;">1</div>
<div id="tx9" class="a t" style="left:57.00px;top:257.85px;font-family:'Liberation Mono', monospace;font-size:28.000px;line-height:28.000px;color:#c5c8c6;font-weight:400;letter-spacing:-0.8px;-webkit-text-stroke:0.4px currentColor;">2</div>
<div id="tx10" class="a t" style="left:57.00px;top:295.95px;font-family:'Liberation Mono', monospace;font-size:28.000px;line-height:28.000px;color:#c5c8c6;font-weight:400;letter-spacing:-0.8px;-webkit-text-stroke:0.4px currentColor;">3</div>
<div id="tx11" class="a t" style="left:109.00px;top:219.75px;font-family:'Liberation Mono', monospace;font-size:28.000px;line-height:28.000px;color:#c5c8c6;font-weight:400;letter-spacing:-0.8px;-webkit-text-stroke:0.4px currentColor;"><span style="color:#c5c8c6">roommates </span><span style="color:#8abeb7">&lt;-</span><span style="color:#c5c8c6"> c</span><span style="color:#8abeb7">(</span><span style="color:#de935f">4</span><span style="color:#c5c8c6">, </span><span style="color:#de935f">2</span><span style="color:#c5c8c6">, </span><span style="color:#de935f">3</span><span style="color:#c5c8c6">, </span><span style="color:#de935f">0</span><span style="color:#8abeb7">)</span></div>
<div id="tx12" class="a t" style="left:109.00px;top:257.85px;font-family:'Liberation Mono', monospace;font-size:28.000px;line-height:28.000px;color:#c5c8c6;font-weight:400;letter-spacing:-0.8px;-webkit-text-stroke:0.4px currentColor;"><span style="color:#c5c8c6">totaloccupants </span><span style="color:#8abeb7">&lt;-</span><span style="color:#c5c8c6"> roommates </span><span style="color:#8abeb7">+</span><span style="color:#c5c8c6"> </span><span style="color:#de935f">1</span></div>
<div id="tx13" class="a t" style="left:109.00px;top:295.95px;font-family:'Liberation Mono', monospace;font-size:28.000px;line-height:28.000px;color:#c5c8c6;font-weight:400;letter-spacing:-0.8px;-webkit-text-stroke:0.4px currentColor;"><span style="color:#c5c8c6">totaloccupants</span></div>
<div class="a" style="left:333px;top:288px;width:3px;height:38px;background:#b0b0b0;"></div>
<div id="tx14" class="a t" style="left:48.93px;top:900.17px;font-family:'Liberation Sans', sans-serif;font-size:24.605px;line-height:24.605px;color:#ffffff;font-weight:400;-webkit-text-stroke:0.35px currentColor;">3:15</div>
<div id="tx15" class="a t" style="left:140.46px;top:900.75px;font-family:'Liberation Sans', sans-serif;font-size:23.926px;line-height:23.926px;color:#ffffff;font-weight:400;-webkit-text-stroke:0.35px currentColor;">(Top Level)</div>
<div id="tx16" class="a t" style="left:1722.99px;top:901.53px;font-family:'Liberation Sans', sans-serif;font-size:23.002px;line-height:23.002px;color:#ffffff;font-weight:400;-webkit-text-stroke:0.35px currentColor;">R Script</div>
<div id="tx17" class="a t" style="left:35.00px;top:955.60px;font-family:'Liberation Sans', sans-serif;font-size:23.390px;line-height:23.390px;color:#ffffff;font-weight:400;-webkit-text-stroke:0.35px currentColor;">Console</div>
<div id="tx18" class="a t" style="left:160.78px;top:954.40px;font-family:'Liberation Sans', sans-serif;font-size:24.691px;line-height:24.691px;color:#ffffff;font-weight:400;-webkit-text-stroke:0.35px currentColor;">Terminal</div>
<div id="tx19" class="a t" style="left:317.82px;top:955.83px;font-family:'Liberation Sans', sans-serif;font-size:23.004px;line-height:23.004px;color:#ffffff;font-weight:400;-webkit-text-stroke:0.35px currentColor;">Background Jobs</div>
<div id="tx20" class="a t" style="left:100.79px;top:1001.06px;font-family:'Liberation Sans', sans-serif;font-size:25.916px;line-height:25.916px;color:#ffffff;font-weight:400;-webkit-text-stroke:0.35px currentColor;">R 4.5.1</div>
<div id="tx21" class="a t" style="left:216.44px;top:1002.02px;font-family:'Liberation Sans', sans-serif;font-size:24.789px;line-height:24.789px;color:#ffffff;font-weight:400;-webkit-text-stroke:0.35px currentColor;">~/Library/CloudStorage/OneDrive-UBC/Teaching/STAT545/STAT545.github.io/</div>
<div class="a" style="left:18px;top:1036px;width:1792px;height:650px;overflow:hidden">
<div class="a t" style="left:12px;top:-15.33px;font-family:'Liberation Mono', monospace;font-size:28px;line-height:28px;letter-spacing:-0.8px;-webkit-text-stroke:0.4px currentColor;color:#c5c8c6">  Natural language support but running in an English locale</div>
<div class="a t" style="left:12px;top:62.11px;font-family:'Liberation Mono', monospace;font-size:28px;line-height:28px;letter-spacing:-0.8px;-webkit-text-stroke:0.4px currentColor;color:#c5c8c6">R is a collaborative project with many contributors.</div>
<div class="a t" style="left:12px;top:100.83px;font-family:'Liberation Mono', monospace;font-size:28px;line-height:28px;letter-spacing:-0.8px;-webkit-text-stroke:0.4px currentColor;color:#c5c8c6">Type &#x27;contributors()&#x27; for more information and</div>
<div class="a t" style="left:12px;top:139.55px;font-family:'Liberation Mono', monospace;font-size:28px;line-height:28px;letter-spacing:-0.8px;-webkit-text-stroke:0.4px currentColor;color:#c5c8c6">&#x27;citation()&#x27; on how to cite R or R packages in publications.</div>
<div class="a t" style="left:12px;top:216.99px;font-family:'Liberation Mono', monospace;font-size:28px;line-height:28px;letter-spacing:-0.8px;-webkit-text-stroke:0.4px currentColor;color:#c5c8c6">Type &#x27;demo()&#x27; for some demos, &#x27;help()&#x27; for on-line help, or</div>
<div class="a t" style="left:12px;top:255.71px;font-family:'Liberation Mono', monospace;font-size:28px;line-height:28px;letter-spacing:-0.8px;-webkit-text-stroke:0.4px currentColor;color:#c5c8c6">&#x27;help.start()&#x27; for an HTML browser interface to help.</div>
<div class="a t" style="left:12px;top:294.43px;font-family:'Liberation Mono', monospace;font-size:28px;line-height:28px;letter-spacing:-0.8px;-webkit-text-stroke:0.4px currentColor;color:#c5c8c6">Type &#x27;q()&#x27; to quit R.</div>
<div class="a t" style="left:12px;top:371.87px;font-family:'Liberation Mono', monospace;font-size:28px;line-height:28px;letter-spacing:-0.8px;-webkit-text-stroke:0.4px currentColor;color:#c5c8c6">[Workspace loaded from ~/Library/CloudStorage/OneDrive-UBC/Teaching/STAT545/STAT545.github.io/.RData]</div>
<div class="a t" style="left:12px;top:449.31px;font-family:'Liberation Mono', monospace;font-size:28px;line-height:28px;letter-spacing:-0.8px;-webkit-text-stroke:0.4px currentColor;color:#b294bb">&gt; roommates &lt;- c(4, 2, 3, 0)</div>
<div class="a t" style="left:12px;top:488.03px;font-family:'Liberation Mono', monospace;font-size:28px;line-height:28px;letter-spacing:-0.8px;-webkit-text-stroke:0.4px currentColor;color:#b294bb">&gt; totaloccupants &lt;- roommates + 1</div>
<div class="a t" style="left:12px;top:526.75px;font-family:'Liberation Mono', monospace;font-size:28px;line-height:28px;letter-spacing:-0.8px;-webkit-text-stroke:0.4px currentColor;color:#b294bb">&gt; totaloccupants</div>
<div class="a t" style="left:12px;top:565.47px;font-family:'Liberation Mono', monospace;font-size:28px;line-height:28px;letter-spacing:-0.8px;-webkit-text-stroke:0.4px currentColor;color:#c5c8c6">[1] 5 3 4 1</div>
<div class="a t" style="left:12px;top:604.19px;font-family:'Liberation Mono', monospace;font-size:28px;line-height:28px;letter-spacing:-0.8px;-webkit-text-stroke:0.4px currentColor;color:#b294bb">&gt; </div>
</div>
<div class="a" style="left:61px;top:1634px;width:3px;height:36px;background:#4a4b4d;"></div>
<div id="tx22" class="a t" style="left:1874.96px;top:131.02px;font-family:'Liberation Sans', sans-serif;font-size:23.953px;line-height:23.953px;color:#ffffff;font-weight:400;-webkit-text-stroke:0.35px currentColor;">Environment</div>
<div id="tx23" class="a t" style="left:2046.89px;top:130.29px;font-family:'Liberation Sans', sans-serif;font-size:24.824px;line-height:24.824px;color:#ffffff;font-weight:400;-webkit-text-stroke:0.35px currentColor;">History</div>
<div id="tx24" class="a t" style="left:2161.99px;top:131.33px;font-family:'Liberation Sans', sans-serif;font-size:23.595px;line-height:23.595px;color:#ffffff;font-weight:400;-webkit-text-stroke:0.35px currentColor;">Connections</div>
<div id="tx25" class="a t" style="left:2330.89px;top:130.19px;font-family:'Liberation Sans', sans-serif;font-size:24.942px;line-height:24.942px;color:#ffffff;font-weight:400;-webkit-text-stroke:0.35px currentColor;">Build</div>
<div id="tx26" class="a t" style="left:2422.99px;top:131.69px;font-family:'Liberation Sans', sans-serif;font-size:23.170px;line-height:23.170px;color:#ffffff;font-weight:400;-webkit-text-stroke:0.35px currentColor;">Git</div>
<div id="tx27" class="a t" style="left:2492.00px;top:129.84px;font-family:'Liberation Sans', sans-serif;font-size:25.357px;line-height:25.357px;color:#ffffff;font-weight:400;-webkit-text-stroke:0.35px currentColor;">Tutorial</div>
<div id="tx28" class="a t" style="left:2022.91px;top:176.82px;font-family:'Liberation Sans', sans-serif;font-size:24.429px;line-height:24.429px;color:#ffffff;font-weight:400;-webkit-text-stroke:0.35px currentColor;">Import Dataset</div>
<div id="tx29" class="a t" style="left:2272.99px;top:177.33px;font-family:'Liberation Sans', sans-serif;font-size:23.831px;line-height:23.831px;color:#ffffff;font-weight:400;-webkit-text-stroke:0.35px currentColor;">50 MiB</div>
<div id="tx30" class="a t" style="left:2770.89px;top:176.46px;font-family:'Liberation Sans', sans-serif;font-size:24.854px;line-height:24.854px;color:#ffffff;font-weight:400;-webkit-text-stroke:0.35px currentColor;">List</div>
<div id="tx31" class="a t" style="left:1873.77px;top:223.80px;font-family:'Liberation Sans', sans-serif;font-size:19.496px;line-height:19.496px;color:#ffffff;font-weight:400;-webkit-text-stroke:0.35px currentColor;">R</div>
<div id="tx32" class="a t" style="left:1986.48px;top:220.17px;font-family:'Liberation Sans', sans-serif;font-size:23.786px;line-height:23.786px;color:#ffffff;font-weight:400;-webkit-text-stroke:0.35px currentColor;">Global Environment</div>
<div id="tx33" class="a t" style="left:1868.00px;top:270.05px;font-family:'Liberation Mono', monospace;font-size:28.000px;line-height:28.000px;color:#ffffff;font-weight:400;letter-spacing:-0.8px;-webkit-text-stroke:0.4px currentColor;">Values</div>
<div id="tx34" class="a t" style="left:1901.00px;top:314.95px;font-family:'Liberation Mono', monospace;font-size:28.000px;line-height:28.000px;color:#c5c8c6;font-weight:400;letter-spacing:-0.8px;-webkit-text-stroke:0.4px currentColor;">roommates</div>
<div id="tx35" class="a t" style="left:2175.00px;top:314.95px;font-family:'Liberation Mono', monospace;font-size:28.000px;line-height:28.000px;color:#c5c8c6;font-weight:400;letter-spacing:-0.8px;-webkit-text-stroke:0.4px currentColor;">num [1:4] 4 2 3 0</div>
<div id="tx36" class="a t" style="left:1901.00px;top:358.55px;font-family:'Liberation Mono', monospace;font-size:28.000px;line-height:28.000px;color:#c5c8c6;font-weight:400;letter-spacing:-0.8px;-webkit-text-stroke:0.4px currentColor;">totaloccupants</div>
<div id="tx37" class="a t" style="left:2175.00px;top:358.55px;font-family:'Liberation Mono', monospace;font-size:28.000px;line-height:28.000px;color:#c5c8c6;font-weight:400;letter-spacing:-0.8px;-webkit-text-stroke:0.4px currentColor;">num [1:4] 5 3 4 1</div>
<div id="tx38" class="a t" style="left:1876.08px;top:712.36px;font-family:'Liberation Sans', sans-serif;font-size:22.025px;line-height:22.025px;color:#ffffff;font-weight:400;-webkit-text-stroke:0.35px currentColor;">Files</div>
<div id="tx39" class="a t" style="left:1961.51px;top:711.49px;font-family:'Liberation Sans', sans-serif;font-size:23.048px;line-height:23.048px;color:#ffffff;font-weight:400;-webkit-text-stroke:0.35px currentColor;">Plots</div>
<div id="tx40" class="a t" style="left:2051.11px;top:712.29px;font-family:'Liberation Sans', sans-serif;font-size:22.107px;line-height:22.107px;color:#ffffff;font-weight:400;-webkit-text-stroke:0.35px currentColor;">Packages</div>
<div id="tx41" class="a t" style="left:2185.39px;top:710.02px;font-family:'Liberation Sans', sans-serif;font-size:24.789px;line-height:24.789px;color:#ffffff;font-weight:400;-webkit-text-stroke:0.35px currentColor;">Help</div>
<div id="tx42" class="a t" style="left:2274.00px;top:711.38px;font-family:'Liberation Sans', sans-serif;font-size:23.174px;line-height:23.174px;color:#ffffff;font-weight:400;-webkit-text-stroke:0.35px currentColor;">Viewer</div>
<div id="tx43" class="a t" style="left:2381.96px;top:710.88px;font-family:'Liberation Sans', sans-serif;font-size:23.773px;line-height:23.773px;color:#ffffff;font-weight:400;-webkit-text-stroke:0.35px currentColor;">Presentation</div>
<div id="tx44" class="a t" style="left:1914.00px;top:758.06px;font-family:'Liberation Sans', sans-serif;font-size:23.325px;line-height:23.325px;color:#ffffff;font-weight:400;-webkit-text-stroke:0.35px currentColor;">Folder</div>
<div id="tx45" class="a t" style="left:2056.04px;top:758.72px;font-family:'Liberation Sans', sans-serif;font-size:22.542px;line-height:22.542px;color:#ffffff;font-weight:400;-webkit-text-stroke:0.35px currentColor;">File</div>
<div id="tx46" class="a t" style="left:2191.00px;top:757.90px;font-family:'Liberation Sans', sans-serif;font-size:23.506px;line-height:23.506px;color:#ffffff;font-weight:400;-webkit-text-stroke:0.35px currentColor;">Delete</div>
<div id="tx47" class="a t" style="left:2322.05px;top:758.60px;font-family:'Liberation Sans', sans-serif;font-size:22.682px;line-height:22.682px;color:#ffffff;font-weight:400;-webkit-text-stroke:0.35px currentColor;">Rename</div>
<div id="tx48" class="a t" style="left:1897.50px;top:801.61px;font-family:'Liberation Sans', sans-serif;font-size:23.500px;line-height:23.500px;color:#b6c6de;font-weight:400;-webkit-text-stroke:0.35px currentColor;-webkit-mask-image:linear-gradient(to right,rgba(0,0,0,.05) 0px,rgba(0,0,0,.15) 12px,rgba(0,0,0,.5) 21px);">e-</div>
<div id="tx49" class="a t" style="left:1918.17px;top:803.30px;font-family:'Liberation Sans', sans-serif;font-size:21.500px;line-height:21.500px;color:#b6c6de;font-weight:400;-webkit-text-stroke:0.35px currentColor;-webkit-mask-image:linear-gradient(to right,rgba(0,0,0,.55) 0px,black 30px);">UBC</div>
<div id="tx50" class="a t" style="left:1998.00px;top:801.18px;font-family:'Liberation Sans', sans-serif;font-size:24.005px;line-height:24.005px;color:#b6c6de;font-weight:400;-webkit-text-stroke:0.35px currentColor;">Teaching</div>
<div id="tx51" class="a t" style="left:2128.00px;top:801.61px;font-family:'Liberation Sans', sans-serif;font-size:23.500px;line-height:23.500px;color:#b6c6de;font-weight:400;-webkit-text-stroke:0.35px currentColor;">STAT545</div>
<div id="tx52" class="a t" style="left:2257.95px;top:800.66px;font-family:'Liberation Sans', sans-serif;font-size:24.619px;line-height:24.619px;color:#b6c6de;font-weight:400;-webkit-text-stroke:0.35px currentColor;">STAT545.github.io</div>
<div id="tx53" class="a t" style="left:2493.00px;top:802.07px;font-family:'Liberation Sans', sans-serif;font-size:22.951px;line-height:22.951px;color:#b6c6de;font-weight:400;-webkit-text-stroke:0.35px currentColor;">webpages</div>
<div id="tx54" class="a t" style="left:2632.99px;top:801.40px;font-family:'Liberation Sans', sans-serif;font-size:23.746px;line-height:23.746px;color:#b6c6de;font-weight:400;-webkit-text-stroke:0.35px currentColor;">lectures_i</div>
<div id="tx55" class="a t" style="left:2768.96px;top:800.78px;font-family:'Liberation Sans', sans-serif;font-size:24.479px;line-height:24.479px;color:#b6c6de;font-weight:400;-webkit-text-stroke:0.35px currentColor;">rfiles</div>
<div id="tx56" class="a t" style="left:2893.62px;top:797.85px;font-family:'Liberation Sans', sans-serif;font-size:27.936px;line-height:27.936px;color:#ffffff;font-weight:400;-webkit-text-stroke:0.35px currentColor;">...</div>
<div id="tx57" class="a t" style="left:2007.02px;top:840.43px;font-family:'Liberation Sans', sans-serif;font-size:23.115px;line-height:23.115px;color:#ffffff;font-weight:400;-webkit-text-stroke:0.35px currentColor;">Name</div>
<div id="tx58" class="a t" style="left:2446.57px;top:842.13px;font-family:'Liberation Sans', sans-serif;font-size:21.108px;line-height:21.108px;color:#ffffff;font-weight:400;-webkit-text-stroke:0.35px currentColor;">Size</div>
<div id="tx59" class="a t" style="left:2604.91px;top:839.18px;font-family:'Liberation Sans', sans-serif;font-size:24.593px;line-height:24.593px;color:#ffffff;font-weight:400;-webkit-text-stroke:0.35px currentColor;">Modified</div>
<div id="tx60" class="a t" style="left:1977.00px;top:883.71px;font-family:'Liberation Sans', sans-serif;font-size:23.500px;line-height:23.500px;color:#c8c8e6;font-weight:400;-webkit-text-stroke:0.35px currentColor;">..</div>
<div id="tx61" class="a t" style="left:1974.90px;top:927.46px;font-family:'Liberation Sans', sans-serif;font-size:26.038px;line-height:26.038px;color:#c8c8e6;font-weight:400;-webkit-text-stroke:0.35px currentColor;">roommates.R</div>
<div id="tx62" class="a t" style="left:2447.89px;top:927.45px;font-family:'Liberation Sans', sans-serif;font-size:26.054px;line-height:26.054px;color:#dcdcdc;font-weight:400;-webkit-text-stroke:0.35px currentColor;">73 B</div>
<div id="tx63" class="a t" style="left:2606.89px;top:927.49px;font-family:'Liberation Sans', sans-serif;font-size:26.007px;line-height:26.007px;color:#dcdcdc;font-weight:400;-webkit-text-stroke:0.35px currentColor;">Sep 2, 2025, 4:22 PM</div>
<div class="a" style="left:0;top:1px;width:2939.5px;height:1701px;border-radius:19px 19px 20px 20px;box-shadow:0 0 0 1px #000, inset 0 0 0 1.6px rgba(255,255,255,0.3);pointer-events:none"></div>
</body></html>
